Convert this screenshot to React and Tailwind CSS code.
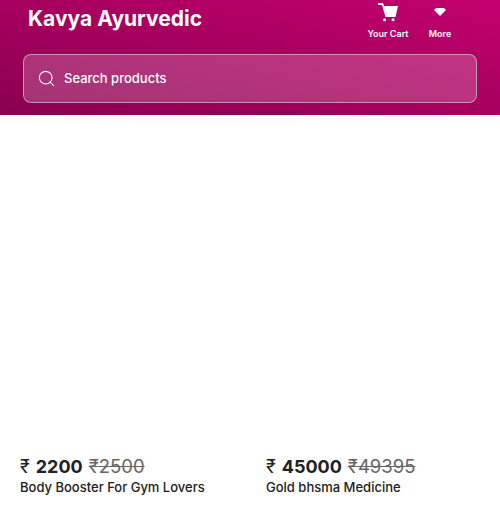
import { Search } from 'lucide-react'

const products = [
  { name: 'Body Booster For Gym Lovers', price: '2200', mrp: '2500' },
  { name: 'Gold bhsma Medicine', price: '45000', mrp: '49395' },
]

function ProductCard({ name, price, mrp }) {
  return (
    <div className="flex flex-col">
      <div className="h-[339px]" />
      <div className="flex items-baseline h-[24px] text-[#212121] leading-[24px]">
        <span className="text-[18px] font-normal">₹</span>
        <span className="ml-[6px] text-[18px] font-bold">{price}</span>
        <span className="ml-[6px] text-[18.5px] text-[#666666] line-through">₹{mrp}</span>
      </div>
      <p className="text-[13px] font-medium text-[#212121] leading-[18px]">{name}</p>
    </div>
  )
}

export default function App() {
  return (
    <div className="w-[500px] h-[518px] bg-white overflow-hidden font-['Inter','Liberation_Sans',sans-serif]">
      <header className="h-[115px] px-[23px] bg-gradient-to-tr from-[#8a0050] to-[#c4006e]">
        <div className="flex justify-between h-[54px]">
          <h1 className="ml-[5px] pt-[6px] text-[21px] leading-[26px] font-bold text-white">Kavya Ayurvedic</h1>
          <nav className="flex text-white text-[9px] font-semibold">
            <div className="flex flex-col items-center w-[40px] mr-[20px]">
              <svg width="20" height="19" viewBox="0 0 20 19" fill="white" className="mt-[3px]">
                <path d="M0 0h5l1 3h14l-2.5 11H7.5L4 2H0z" />
                <circle cx="6.5" cy="16.8" r="1.5" />
                <circle cx="15" cy="16.8" r="1.5" />
              </svg>
              <span className="mt-[5px] whitespace-nowrap">Your Cart</span>
            </div>
            <div className="flex flex-col items-center w-[24px] mr-[25px]">
              <svg width="12" height="8" viewBox="0 0 12 8" fill="white" className="mt-[8px]">
                <path d="M2 0h8l2 2-6 6-6-6z" />
              </svg>
              <span className="mt-[11px]">More</span>
            </div>
          </nav>
        </div>
        <div className="flex items-center h-[49px] rounded-[8px] border border-[#c8d8d0a0] bg-[#ffffff33] pl-[13px]">
          <Search size={19} strokeWidth={1.4} className="text-white" />
          <span className="ml-[8px] text-[13px] font-medium text-white">Search products</span>
        </div>
      </header>
      <main className="grid grid-cols-[246px_1fr] px-[20px]">
        {products.map(p => <ProductCard key={p.name} {...p} />)}
      </main>
    </div>
  )
}
